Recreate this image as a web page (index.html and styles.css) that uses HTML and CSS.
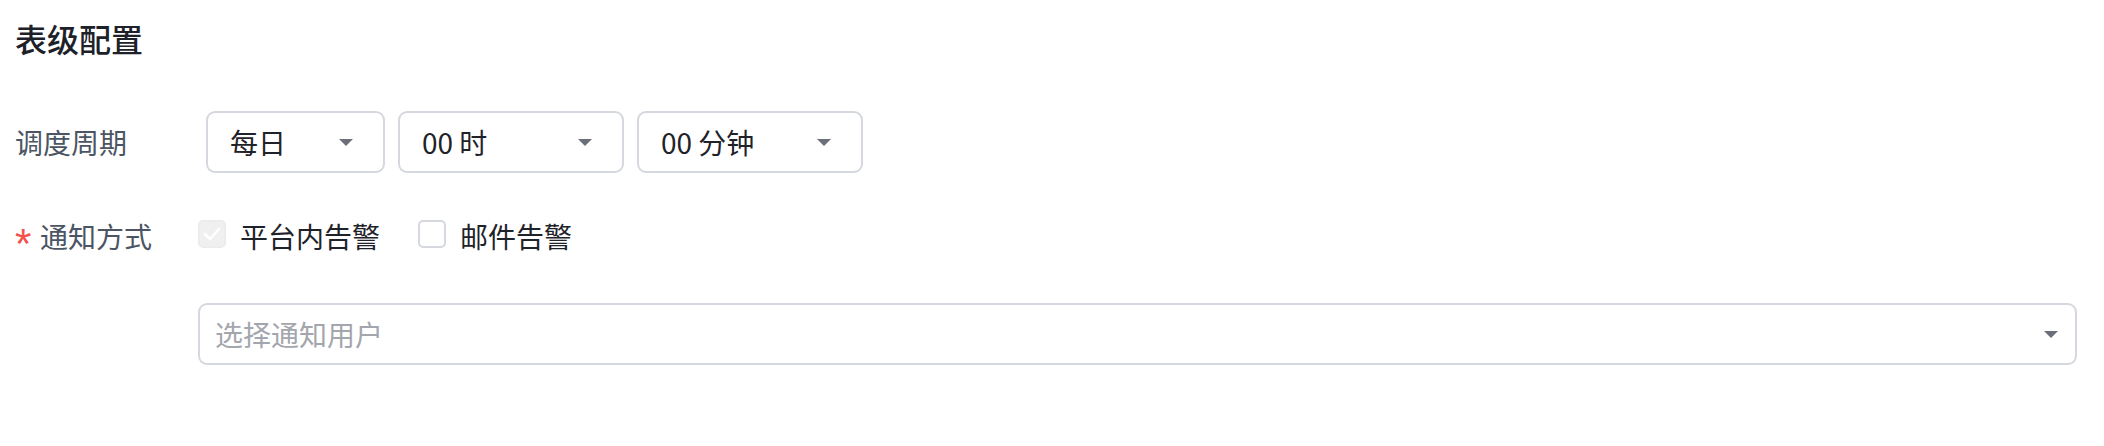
FILE: index.html
```html
<!DOCTYPE html>
<html lang="zh-CN">
<head>
<meta charset="utf-8">
<title>表级配置</title>
<link rel="stylesheet" href="styles.css">
</head>
<body>
<div class="page">
  <h2 class="title">表级配置</h2>

  <div class="row row-schedule">
    <div class="label">调度周期</div>
    <div class="selects">
      <div class="select select-day">
        <span class="value">每日</span>
        <svg class="arrow" width="14" height="7" viewBox="0 0 14 7"><polygon points="0,0 14,0 7,7"/></svg>
      </div>
      <div class="select select-time">
        <span class="value">00 时</span>
        <svg class="arrow" width="14" height="7" viewBox="0 0 14 7"><polygon points="0,0 14,0 7,7"/></svg>
      </div>
      <div class="select select-time">
        <span class="value">00 分钟</span>
        <svg class="arrow" width="14" height="7" viewBox="0 0 14 7"><polygon points="0,0 14,0 7,7"/></svg>
      </div>
    </div>
  </div>

  <div class="row row-notify">
    <div class="label"><span class="req">*</span>通知方式</div>
    <div class="checks">
      <label class="check">
        <span class="box box-disabled">
          <svg width="18" height="14" viewBox="0 0 18 14"><polyline points="2,7 7,12 16,2" fill="none" stroke="#ffffff" stroke-width="2.6" stroke-linecap="round" stroke-linejoin="round"/></svg>
        </span>
        <span class="check-text">平台内告警</span>
      </label>
      <label class="check">
        <span class="box"></span>
        <span class="check-text">邮件告警</span>
      </label>
    </div>
  </div>

  <div class="row row-users">
    <div class="label"></div>
    <div class="select select-wide">
      <span class="placeholder">选择通知用户</span>
      <svg class="arrow" width="14" height="7" viewBox="0 0 14 7"><polygon points="0,0 14,0 7,7"/></svg>
    </div>
  </div>
</div>
</body>
</html>
```

FILE: styles.css
```css
html, body {
  margin: 0;
  padding: 0;
  background: #ffffff;
}

body {
  font-family: "Noto Sans CJK SC", "Noto Sans", "Liberation Sans", sans-serif;
  color: #1f2329;
}

.page {
  padding: 22px 27px 0 15px;
}

.title {
  margin: 0;
  font-size: 32px;
  line-height: 32px;
  font-weight: 500;
  color: #1d2129;
}

.row {
  display: flex;
  align-items: center;
}

.label {
  width: 183px;
  height: 40px;
  flex: none;
  font-size: 28px;
  line-height: 40px;
  color: #4b5563;
  display: flex;
  align-items: center;
}

.req {
  color: #f5504e;
  width: 25px;
  flex: none;
  font-family: "Liberation Sans", sans-serif;
  font-size: 42px;
  line-height: 24px;
  padding-top: 16px;
}

.row-schedule {
  margin-top: 57px;
}

.selects {
  display: flex;
  gap: 13px;
  margin-left: 8px;
}

.select {
  box-sizing: border-box;
  height: 62px;
  border: 2px solid #d5d8de;
  border-radius: 9px;
  display: flex;
  align-items: center;
  justify-content: space-between;
  padding: 0 30px 0 22px;
  background: #ffffff;
}

.select-day {
  width: 179px;
}

.select-time {
  width: 226px;
}

.value {
  font-size: 28px;
  line-height: 40px;
  color: #1f2329;
}

.arrow {
  fill: #6b6f7a;
  display: block;
}

.row-notify {
  margin-top: 43px;
}

.checks {
  display: flex;
  align-items: center;
}

.check {
  display: flex;
  align-items: center;
  margin-right: 38px;
}

.box {
  box-sizing: border-box;
  width: 28px;
  height: 28px;
  border: 2px solid #d5d8de;
  border-radius: 5px;
  background: #ffffff;
  margin-right: 14px;
  margin-bottom: 4px;
  display: flex;
  align-items: center;
  justify-content: center;
}

.box-disabled {
  background: #f0f0f1;
  border-color: #ececee;
}

.check-text {
  font-size: 28px;
  line-height: 40px;
  color: #1f2329;
}

.row-users {
  margin-top: 47px;
}

.select-wide {
  flex: 1;
  padding: 0 17px 0 15px;
}

.placeholder {
  font-size: 28px;
  line-height: 40px;
  color: #a3a6ad;
}
```
